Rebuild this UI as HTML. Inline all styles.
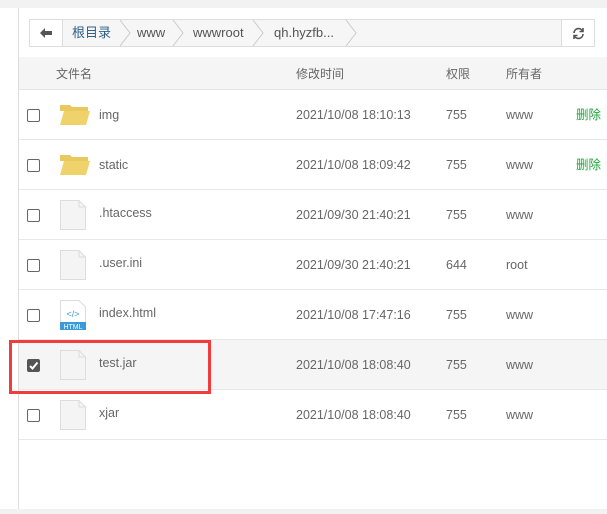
<!DOCTYPE html>
<html><head><meta charset="utf-8"><style>
*{margin:0;padding:0;box-sizing:border-box}
body{width:607px;height:514px;background:#fff;position:relative;overflow:hidden;font-family:"Liberation Sans","Noto Sans CJK SC",sans-serif;font-size:12px;color:#555}
.abs{position:absolute}
.top{left:0;top:0;width:607px;height:8px;background:#f2f2f2}
.bot{left:0;top:509px;width:607px;height:5px;background:#f2f2f2}
.vl{left:18px;top:8px;width:1px;height:501px;background:#ddd}
.bc{left:29px;top:19px;width:566px;height:28px;border:1px solid #ddd;background:#f6f6f6}
.btn{top:0;width:33px;height:26px;background:#fff;text-align:center;line-height:26px}
.crumb{top:0;line-height:26px;font-size:13px;color:#555}
.hdr{left:19px;top:57px;width:588px;height:33px;background:#f5f5f5;border-bottom:1px solid #e6e6e6}
.hdr span{position:absolute;top:9px;color:#666;font-size:12px;line-height:16px}
.row{left:19px;width:588px;height:50px;border-bottom:1px solid #e8e8e8}
.row span{position:absolute;top:17px;font-size:12.5px;color:#666;line-height:16px}
.cb{position:absolute;left:8px;top:19px;width:13px;height:13px;border:1px solid #666;border-radius:2px;background:#fff}
.del{color:#20a53a!important}
</style></head><body>
<div class="abs top"></div><div class="abs bot"></div><div class="abs vl"></div>
<div class="abs bc">
 <div class="abs btn" style="left:0;border-right:1px solid #ddd"><svg width="14" height="12" viewBox="0 0 14 12" style="margin-top:7px"><path d="M1 6 L6 1 V4 H13 V8 H6 V11 Z" fill="#555"/></svg></div>
 <div class="abs btn" style="right:0;border-left:1px solid #ddd"><svg width="13" height="13" viewBox="0 0 13 13" style="margin-top:7px" fill="none" stroke="#555" stroke-width="1.6"><path d="M2 6 A4.5 4.5 0 0 1 10.5 4"/><path d="M11 7 A4.5 4.5 0 0 1 2.5 9"/><path d="M11 1 V4.5 H7.5" /><path d="M2 12 V8.5 H5.5"/></svg></div>
 <svg class="abs" style="left:90px;top:0" width="250" height="26" fill="none" stroke="#ccc"><path d="M0 0 L10 13 L0 26"/><path d="M53 0 L63 13 L53 26"/><path d="M133 0 L143 13 L133 26"/><path d="M226 0 L236 13 L226 26"/></svg>
 <span class="abs crumb" style="left:42px;color:#2d5f8a">根目录</span>
 <span class="abs crumb" style="left:107px">www</span>
 <span class="abs crumb" style="left:163px">wwwroot</span>
 <span class="abs crumb" style="left:244px">qh.hyzfb...</span>
</div>
<div class="abs hdr"><span style="left:37px">文件名</span><span style="left:277px">修改时间</span><span style="left:427px">权限</span><span style="left:487px">所有者</span></div>

<div class="abs row" style="top:90px"><div class="cb"></div>
<svg class="abs" style="left:41px;top:13px" width="30" height="22"><path d="M0 2 H10 L12 4 H28 V8 H0Z" fill="#e8c95e"/><path d="M0 22 L4 8 H30 L26 22Z" fill="#f0d26a"/></svg>
<span style="left:80px">img</span><span style="left:277px">2021/10/08 18:10:13</span><span style="left:427px">755</span><span style="left:487px">www</span><span class="del" style="left:557px">删除</span></div>
<div class="abs row" style="top:140px"><div class="cb"></div>
<svg class="abs" style="left:41px;top:13px" width="30" height="22"><path d="M0 2 H10 L12 4 H28 V8 H0Z" fill="#e8c95e"/><path d="M0 22 L4 8 H30 L26 22Z" fill="#f0d26a"/></svg>
<span style="left:80px">static</span><span style="left:277px">2021/10/08 18:09:42</span><span style="left:427px">755</span><span style="left:487px">www</span><span class="del" style="left:557px">删除</span></div>

<div class="abs row" style="top:190px"><div class="cb"></div>
<svg class="abs" style="left:41px;top:10px" width="27" height="30"><path d="M0.5 0.5 H19 L25.5 7 V29.5 H0.5Z" fill="#f4f4f4" stroke="#ddd"/><path d="M19 0.5 V7 H25.5" fill="none" stroke="#ddd"/></svg>
<span style="left:80px;top:15px">.htaccess</span><span style="left:277px">2021/09/30 21:40:21</span><span style="left:427px">755</span><span style="left:487px">www</span></div>
<div class="abs row" style="top:240px"><div class="cb"></div>
<svg class="abs" style="left:41px;top:10px" width="27" height="30"><path d="M0.5 0.5 H19 L25.5 7 V29.5 H0.5Z" fill="#f4f4f4" stroke="#ddd"/><path d="M19 0.5 V7 H25.5" fill="none" stroke="#ddd"/></svg>
<span style="left:80px;top:15px">.user.ini</span><span style="left:277px">2021/09/30 21:40:21</span><span style="left:427px">644</span><span style="left:487px">root</span></div>
<div class="abs row" style="top:290px"><div class="cb"></div>
<svg class="abs" style="left:41px;top:10px" width="27" height="30"><path d="M0.5 0.5 H19 L25.5 7 V29.5 H0.5Z" fill="#fff" stroke="#ddd"/><text x="13" y="17" font-size="9" fill="#3a9ad9" text-anchor="middle" font-family="Liberation Sans">&lt;/&gt;</text><rect x="0" y="22" width="26" height="8" fill="#3a9ad9"/><text x="13" y="29" font-size="7" fill="#fff" text-anchor="middle" font-family="Liberation Sans">HTML</text></svg>
<span style="left:80px;top:15px">index.html</span><span style="left:277px">2021/10/08 17:47:16</span><span style="left:427px">755</span><span style="left:487px">www</span></div>
<div class="abs row" style="top:340px;background:#f5f5f5"><div class="cb" style="background:#555;border-color:#555"><svg width="11" height="11" style="position:absolute;left:0;top:0"><path d="M2 6 L4.5 8.5 L9.5 2.5" stroke="#fff" stroke-width="2" fill="none"/></svg></div>
<svg class="abs" style="left:41px;top:10px" width="27" height="30"><path d="M0.5 0.5 H19 L25.5 7 V29.5 H0.5Z" fill="#f4f4f4" stroke="#ddd"/><path d="M19 0.5 V7 H25.5" fill="none" stroke="#ddd"/></svg>
<span style="left:80px;top:15px">test.jar</span><span style="left:277px">2021/10/08 18:08:40</span><span style="left:427px">755</span><span style="left:487px">www</span></div>
<div class="abs row" style="top:390px"><div class="cb"></div>
<svg class="abs" style="left:41px;top:10px" width="27" height="30"><path d="M0.5 0.5 H19 L25.5 7 V29.5 H0.5Z" fill="#f4f4f4" stroke="#ddd"/><path d="M19 0.5 V7 H25.5" fill="none" stroke="#ddd"/></svg>
<span style="left:80px;top:15px">xjar</span><span style="left:277px">2021/10/08 18:08:40</span><span style="left:427px">755</span><span style="left:487px">www</span></div>
<div class="abs" style="left:9px;top:340px;width:202px;height:54px;border:3px solid #f03c3c"></div>
</body></html>
